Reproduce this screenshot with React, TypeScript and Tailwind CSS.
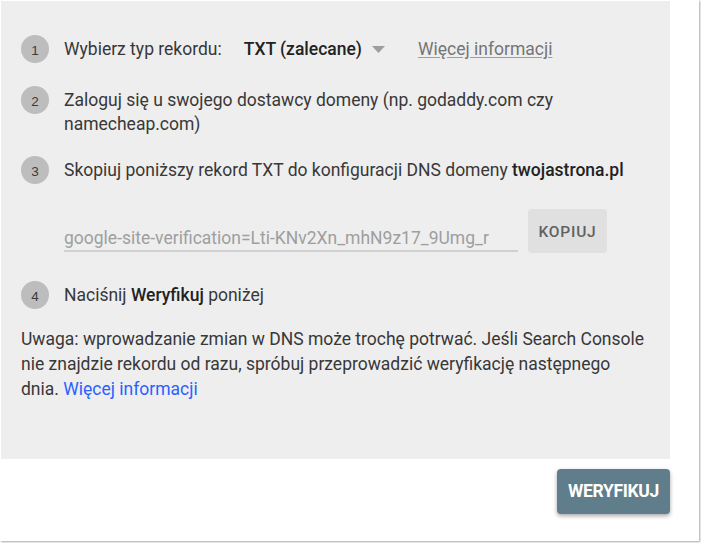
import React from "react";

const Circle = ({ n }: { n: number }) => (
  <div className="w-7 h-7 shrink-0 rounded-full bg-[#bdbdbd] flex items-center justify-center text-[13.5px] text-[#3a3a3a] pt-[3px]" style={{ fontFamily: "Arial, 'Liberation Sans', sans-serif" }}>
    {n}
  </div>
);

export default function App() {
  return (
    <div className="w-[701px] h-[543px] bg-white" style={{ fontFamily: "Roboto, 'Liberation Sans', sans-serif" }}>
      <div className="w-[699px] h-[541px] bg-white shadow-[1px_1px_2px_rgba(0,0,0,0.35)] pt-[1px] pl-[1px]">
        <div className="w-[669px] h-[458px] bg-[#eeeeee] pl-5 pr-5 pt-[34px] text-[17.5px] text-[#383838] leading-6">
          {/* step 1 */}
          <div className="flex items-center h-7">
            <Circle n={1} />
            <span className="ml-[15px]">Wybierz typ rekordu:</span>
            <span className="ml-[22px] font-medium text-[#222]">TXT (zalecane)</span>
            <svg width="13" height="7" viewBox="0 0 13 7" className="ml-[10px] mt-[1px]">
              <path d="M0 0 L13 0 L6.5 7 Z" fill="#9e9e9e" />
            </svg>
            <span className="ml-[33px] text-[#757575] underline underline-offset-2 decoration-[#9e9e9e]">Więcej informacji</span>
          </div>
          {/* step 2 */}
          <div className="flex items-start mt-[23px]">
            <Circle n={2} />
            <div className="ml-[15px] pt-[2px]">
              Zaloguj się u swojego dostawcy domeny (np. godaddy.com czy namecheap.com)
            </div>
          </div>
          {/* step 3 */}
          <div className="flex items-center h-7 mt-[20px]">
            <Circle n={3} />
            <span className="ml-[15px] whitespace-nowrap">
              Skopiuj poniższy rekord TXT do konfiguracji DNS domeny <span className="font-medium text-[#222]">twojastrona.pl</span>
            </span>
          </div>
          <div className="flex items-end ml-[43px] mt-[25px] h-[44px]">
            <div className="w-[454px] h-[28px] border-b-2 border-[#d0d0d0] text-[#9e9e9e] overflow-hidden whitespace-nowrap leading-[28px] mb-[1px]">
              google-site-verification=Lti-KNv2Xn_mhN9z17_9Umg_r
            </div>
            <button className="ml-[10px] w-[79px] h-[44px] rounded-[4px] bg-[#e0e0e0] text-[#616161] text-[15.5px] font-medium tracking-[0.05em] pt-[1px] self-start">
              KOPIUJ
            </button>
          </div>
          {/* step 4 */}
          <div className="flex items-center h-7 mt-[28px]">
            <Circle n={4} />
            <span className="ml-[15px]">
              Naciśnij <span className="font-medium text-[#222]">Weryfikuj</span> poniżej
            </span>
          </div>
          <p className="mt-[18px] leading-[25px]">
            Uwaga: wprowadzanie zmian w DNS może trochę potrwać. Jeśli Search Console nie znajdzie rekordu od razu, spróbuj przeprowadzić weryfikację następnego dnia. <span className="text-[#2962ff]">Więcej informacji</span>
          </p>
        </div>
        <div className="w-[669px] flex justify-end mt-[10px]">
          <button className="w-[113px] h-[45px] rounded-[4px] bg-[#607d8b] text-white text-[17.5px] font-bold shadow-[0_2px_4px_rgba(0,0,0,0.35)] tracking-[-0.02em]">
            WERYFIKUJ
          </button>
        </div>
      </div>
    </div>
  );
}
